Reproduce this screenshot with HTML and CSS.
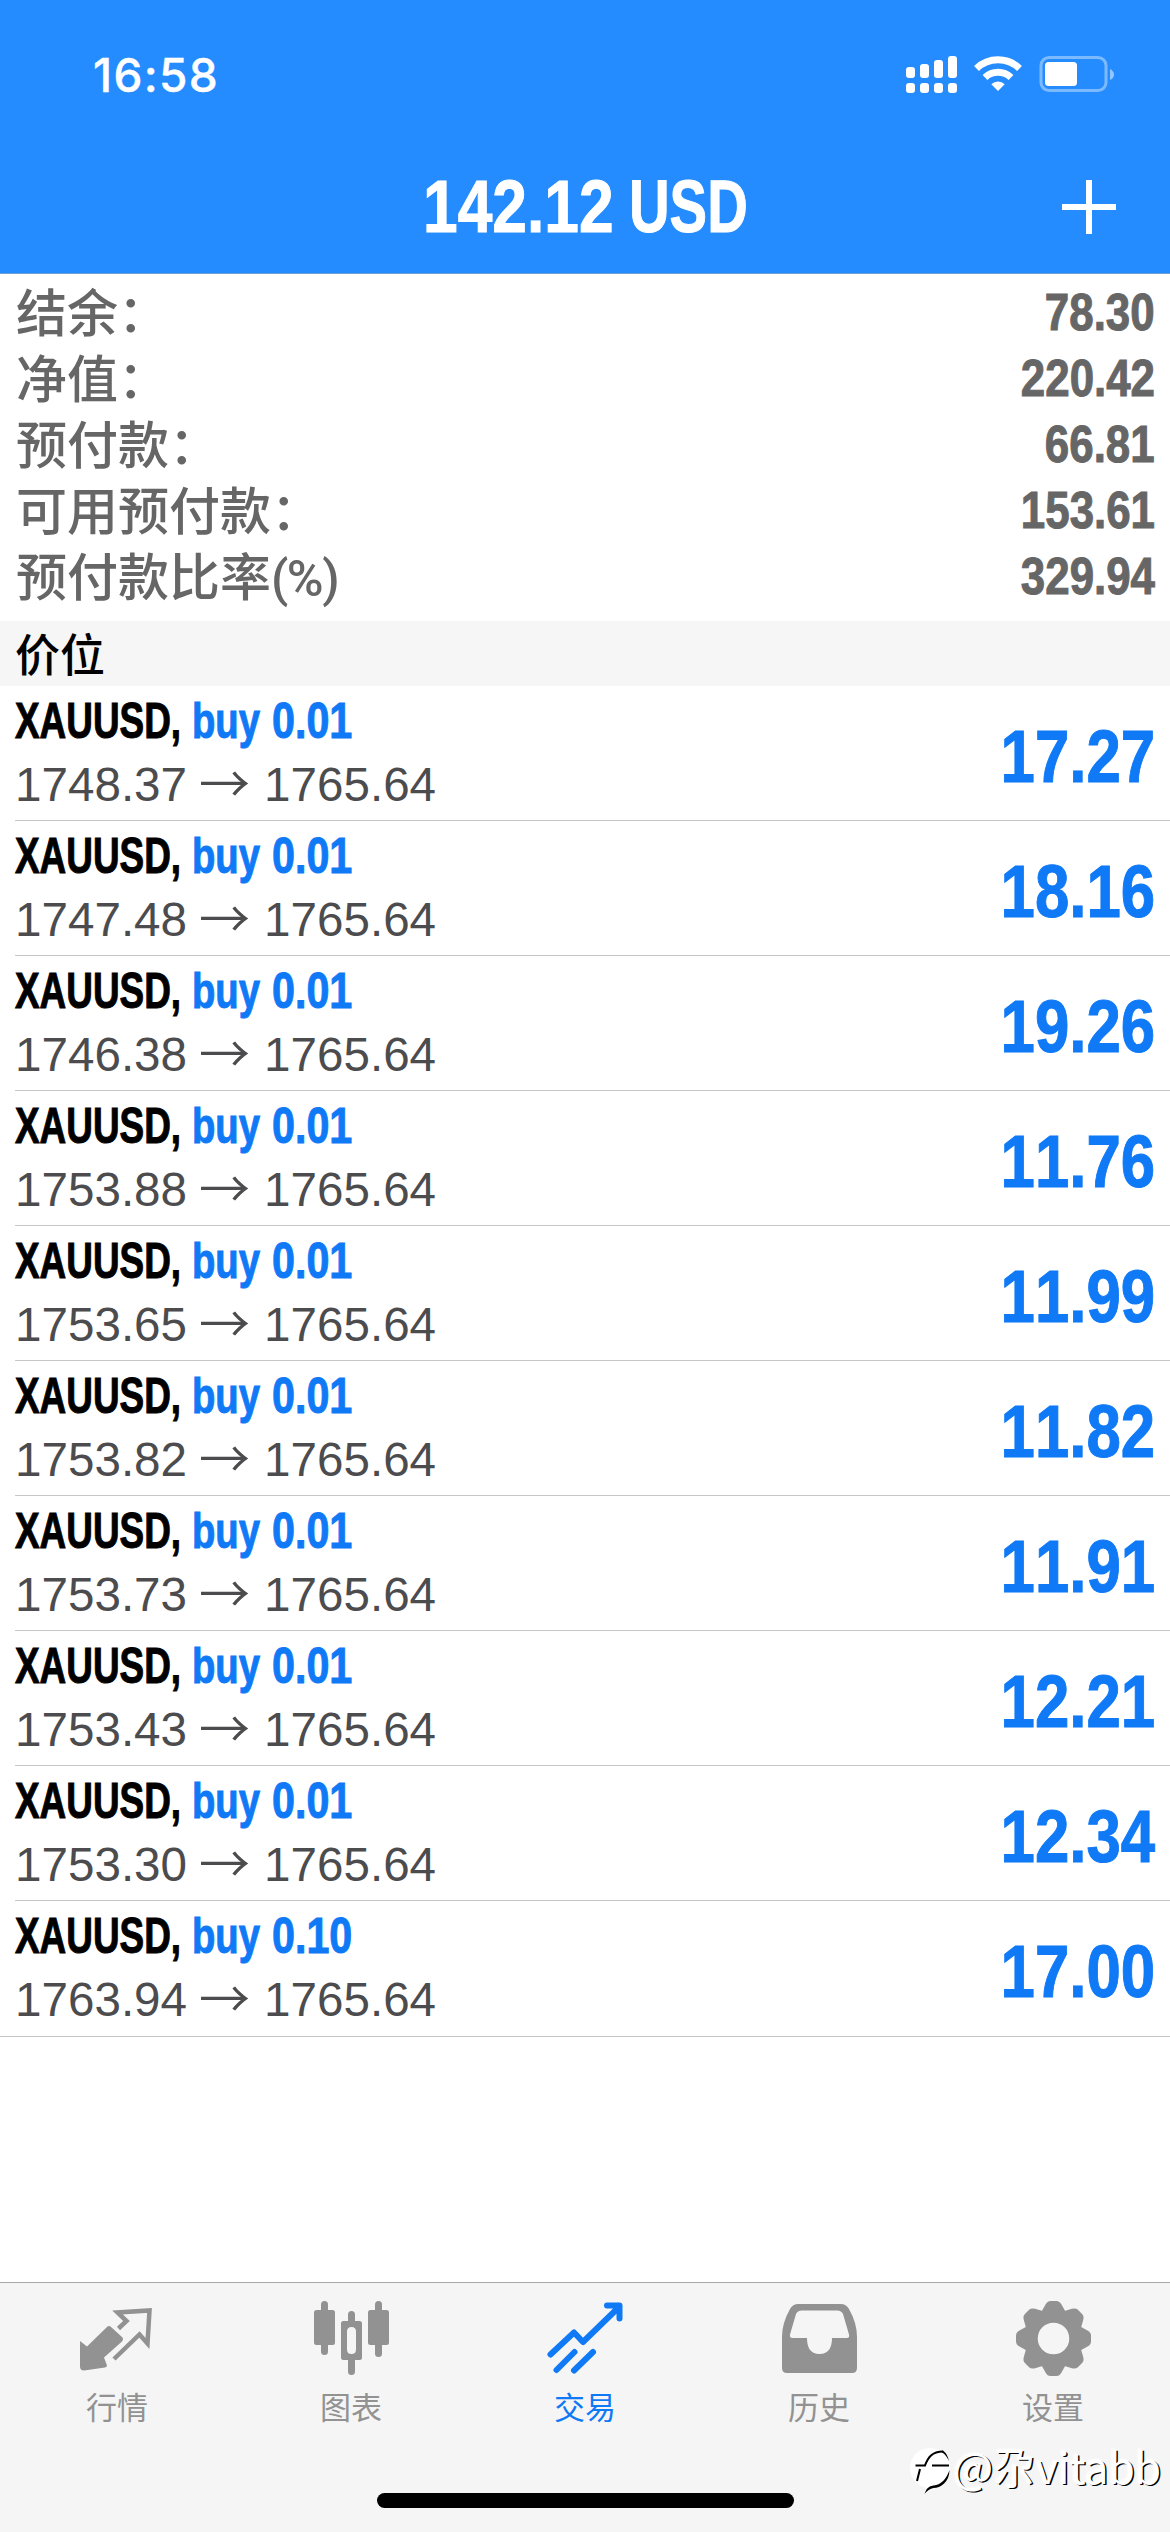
FILE: index.html
```html
<!DOCTYPE html>
<html lang="zh-CN">
<head>
<meta charset="utf-8">
<title>交易</title>
<link rel="stylesheet" href="styles.css">
</head>
<body>
<div class="app">
  <header class="header">
    <div class="status">
      <span class="clock">16:58</span>
      <svg class="status-icons" width="210" height="40" viewBox="906 54 210 40" fill="#fff">
        <rect x="907" y="67" width="9" height="11" rx="3"/><rect x="921" y="64" width="9" height="14" rx="3"/><rect x="935" y="60" width="9" height="18" rx="3"/><rect x="949" y="56" width="9" height="22" rx="3"/>
        <rect x="907" y="83" width="9" height="10" rx="3"/><rect x="921" y="83" width="9" height="10" rx="3"/><rect x="935" y="83" width="9" height="10" rx="3"/><rect x="949" y="83" width="9" height="10" rx="3"/>
        <g fill="none" stroke="#fff" stroke-width="7"><path d="M977.5 68.5a31 31 0 0 1 43 0"/><path d="M986 77.5a19 19 0 0 1 26 0"/></g>
        <path d="M992.300 84.200a9.500 9.500 0 0 1 13.400 0L999 91z"/>
        <rect x="1042" y="57.500" width="65" height="33" rx="8" fill="none" stroke="#fff" stroke-opacity=".4" stroke-width="3"/>
        <rect x="1046" y="62" width="32" height="24" rx="3.500"/>
        <path d="M1111 69q4 2 4 5.500t-4 5.500z" opacity=".5"/>
      </svg>
    </div>
    <div class="titlebar">
      <h1 class="title"><span class="fit t-num"><b>142.12</b></span><span class="fit t-cur"><b>USD</b></span></h1>
      <svg class="plus" width="54" height="54" viewBox="0 0 54 54"><path d="M27 0v54M0 27h54" stroke="#fff" stroke-width="6"/></svg>
    </div>
  </header>

  <section class="summary">
    <div class="sum-row"><span>结余：</span><b>78.30</b></div>
    <div class="sum-row"><span>净值：</span><b>220.42</b></div>
    <div class="sum-row"><span>预付款：</span><b>66.81</b></div>
    <div class="sum-row"><span>可用预付款：</span><b>153.61</b></div>
    <div class="sum-row"><span>预付款比率<em>(%)</em></span><b>329.94</b></div>
  </section>

  <h2 class="section">价位</h2>

  <ul class="positions">
    <li class="pos"><div class="info"><div class="line1"><span class="fit sym"><b>XAUUSD,</b></span><span class="fit side"><b>buy</b></span><span class="fit vol"><b>0.01</b></span></div><div class="line2">1748.37<i>→</i>1765.64</div></div><b class="profit">17.27</b></li>
    <li class="pos"><div class="info"><div class="line1"><span class="fit sym"><b>XAUUSD,</b></span><span class="fit side"><b>buy</b></span><span class="fit vol"><b>0.01</b></span></div><div class="line2">1747.48<i>→</i>1765.64</div></div><b class="profit">18.16</b></li>
    <li class="pos"><div class="info"><div class="line1"><span class="fit sym"><b>XAUUSD,</b></span><span class="fit side"><b>buy</b></span><span class="fit vol"><b>0.01</b></span></div><div class="line2">1746.38<i>→</i>1765.64</div></div><b class="profit">19.26</b></li>
    <li class="pos"><div class="info"><div class="line1"><span class="fit sym"><b>XAUUSD,</b></span><span class="fit side"><b>buy</b></span><span class="fit vol"><b>0.01</b></span></div><div class="line2">1753.88<i>→</i>1765.64</div></div><b class="profit">11.76</b></li>
    <li class="pos"><div class="info"><div class="line1"><span class="fit sym"><b>XAUUSD,</b></span><span class="fit side"><b>buy</b></span><span class="fit vol"><b>0.01</b></span></div><div class="line2">1753.65<i>→</i>1765.64</div></div><b class="profit">11.99</b></li>
    <li class="pos"><div class="info"><div class="line1"><span class="fit sym"><b>XAUUSD,</b></span><span class="fit side"><b>buy</b></span><span class="fit vol"><b>0.01</b></span></div><div class="line2">1753.82<i>→</i>1765.64</div></div><b class="profit">11.82</b></li>
    <li class="pos"><div class="info"><div class="line1"><span class="fit sym"><b>XAUUSD,</b></span><span class="fit side"><b>buy</b></span><span class="fit vol"><b>0.01</b></span></div><div class="line2">1753.73<i>→</i>1765.64</div></div><b class="profit">11.91</b></li>
    <li class="pos"><div class="info"><div class="line1"><span class="fit sym"><b>XAUUSD,</b></span><span class="fit side"><b>buy</b></span><span class="fit vol"><b>0.01</b></span></div><div class="line2">1753.43<i>→</i>1765.64</div></div><b class="profit">12.21</b></li>
    <li class="pos"><div class="info"><div class="line1"><span class="fit sym"><b>XAUUSD,</b></span><span class="fit side"><b>buy</b></span><span class="fit vol"><b>0.01</b></span></div><div class="line2">1753.30<i>→</i>1765.64</div></div><b class="profit">12.34</b></li>
    <li class="pos"><div class="info"><div class="line1"><span class="fit sym"><b>XAUUSD,</b></span><span class="fit side"><b>buy</b></span><span class="fit vol"><b>0.10</b></span></div><div class="line2">1763.94<i>→</i>1765.64</div></div><b class="profit">17.00</b></li>
  </ul>

  <nav class="tabs">
    <a class="tab">
      <svg width="76" height="76" viewBox="0 0 76 76"><path d="M1 41L8 46.500 28 27q2-2 4 0L43 37q2 2 0 4.500L25 57.500l3 8q0 1.500-2 2L5 70.500q-4 0-4-4z" fill="currentColor"/><path d="M39.500 28.500l8-7.500-9-8.500L70.500 10.500 68.500 43.500 60.500 34.500 35 59" fill="none" stroke="currentColor" stroke-width="4.500"/></svg>
      <span>行情</span>
    </a>
    <a class="tab">
      <svg width="76" height="76" viewBox="0 0 76 76" fill="currentColor"><rect x="8" y="1" width="7" height="54" rx="3.500"/><rect x="1" y="10" width="21" height="35" rx="2.500"/><rect x="62" y="1" width="7" height="56" rx="3.500"/><rect x="55" y="10" width="21" height="35" rx="2.500"/><path fill-rule="evenodd" d="M35 21v-6.500a3.500 3.500 0 0 1 7 0V21h4.500q2.500 0 2.500 2.500v34q0 2.500-2.500 2.500H42v11.500a3.500 3.500 0 0 1-7 0V60h-4.500q-2.500 0-2.500-2.500v-34q0-2.500 2.500-2.500zM38.500 27q-4.500 0-4.500 4.500v18q0 4.500 4.500 4.500t4.500-4.500v-18q0-4.500-4.500-4.500z"/></svg>
      <span>图表</span>
    </a>
    <a class="tab active">
      <svg width="76" height="76" viewBox="0 0 76 76" fill="none" stroke="currentColor" stroke-width="6" stroke-linecap="round" stroke-linejoin="round"><path d="M3.500 54.500L27 32.500 36 42 71 8M60 5.500h12.500V18.500"/><path d="M9.500 70L27.500 52M27 70.500L46 52"/></svg>
      <span>交易</span>
    </a>
    <a class="tab">
      <svg width="76" height="76" viewBox="0 0 76 76" fill="currentColor"><path fill-rule="evenodd" d="M17 4h43q5 0 8 5 8 14 8 28v31q0 5-5 5H6q-5 0-5-5V37Q1 23 9 9q3-5 8-5zM21 10.500q-4.500 0-6 3.500L9 34.500q-.5 3.500 2.500 3.500H26c0 9 3 16 12.500 16S51 47 51 38h14.500q3.500 0 2.500-3.500L62 14q-1.500-3.500-6-3.500z"/></svg>
      <span>历史</span>
    </a>
    <a class="tab">
      <svg width="76" height="76" viewBox="-38.500 -38.500 76 76" fill="currentColor"><g><path id="tooth" d="M-13-25L-8-34q2-3.500 5-3.500h6q3 0 5 3.500L13-25z"/><use href="#tooth" transform="rotate(45)"/><use href="#tooth" transform="rotate(90)"/><use href="#tooth" transform="rotate(135)"/><use href="#tooth" transform="rotate(180)"/><use href="#tooth" transform="rotate(225)"/><use href="#tooth" transform="rotate(270)"/><use href="#tooth" transform="rotate(315)"/></g><circle r="22.500" fill="none" stroke="currentColor" stroke-width="13.500"/></svg>
      <span>设置</span>
    </a>
  </nav>
  <div class="home-indicator"></div>
  <div class="watermark">
    <svg width="40" height="48" viewBox="0 0 40 48"><circle cx="20" cy="20" r="20" fill="#fff"/><path d="M20 38l12-4-18 13z" fill="#fff"/><path d="M5.500 17.500h9.500c3-8 7-14 18-14M22 17.500h17M10 21L7 33" fill="none" stroke="#000" stroke-width="2"/><path d="M33 2.500q5 4 6 11-2-6-8-10zM39.500 22c0 12-9 18-16 18q-5 1-9 6 2-8 9-8.500 11-1 16-15.500z"/></svg>
    <span>@尕vitabb</span>
  </div>
</div>
</body>
</html>
```
FILE: styles.css
```css
* { box-sizing: border-box; }
body, h1, h2, ul { margin: 0; padding: 0; }
body { width: 1170px; height: 2532px; background: #fff; font-family: "Liberation Sans", "Noto Sans CJK SC", sans-serif; font-kerning: none; overflow: hidden; }
.app { position: relative; display: flex; flex-direction: column; width: 1170px; height: 2532px; }

.header { height: 274px; background: #258cff; border-bottom: 1px solid #6d9fd6; color: #fff; }
.status { height: 132px; padding: 54px 55px 0 93px; display: flex; justify-content: space-between; }
.clock { font: 500 46px/42px Inter, sans-serif; letter-spacing: 1.3px; -webkit-text-stroke: .4px; }
.status-icons { display: block; }
.titlebar { display: grid; grid-template-columns: 1fr auto 1fr; align-items: center; height: 141px; padding: 8px 54px 0; }
.title { grid-column: 2; display: flex; font-size: 74px; line-height: 84px; gap: 15px; }
.plus { justify-self: end; }

.fit { display: block; white-space: nowrap; }
.fit b { display: block; transform-origin: 0 50%; }
.fit b, .sum-row b, .profit { -webkit-text-stroke: 1px; }
.t-num { width: 191px; }
.t-num b { transform: scaleX(.842); }
.t-cur { width: 118px; }
.t-cur b { transform: scaleX(.76); }

.summary { height: 347px; padding-top: 6px; color: #666; }
.sum-row { display: flex; justify-content: space-between; height: 66px; padding: 0 15px 0 16px; line-height: 66px; font-size: 51px; }
.sum-row span { height: 66px; font-family: "Noto Sans CJK SC", sans-serif; font-weight: 500; line-height: 61px; }
.sum-row em { font: 500 50px/50px Roboto, sans-serif; letter-spacing: -1.500px; }
.sum-row b { transform: scaleX(.86); transform-origin: 100% 50%; }

.section { height: 65px; padding-left: 15px; background: #f6f6f6; font: 500 45px/63px "Noto Sans CJK SC", sans-serif; color: #000; }

.positions { list-style: none; }
.pos { display: flex; justify-content: space-between; height: 135px; margin-left: 15px; padding-right: 15px; border-bottom: 1px solid #c6c6c8; }
.pos:last-child { height: 136px; margin-left: 0; padding-left: 15px; }
.line1 { display: flex; height: 66px; padding-top: 7px; font-size: 50px; line-height: 57px; color: #0f79f6; }
.sym { width: 177px; color: #000; }
.sym b { transform: scaleX(.738); }
.side { width: 80px; }
.side b { transform: scaleX(.765); }
.vol b { transform: scaleX(.825); }
.line2 { display: flex; padding-top: 6px; font-size: 47.600px; line-height: 54px; color: #4c4c4e; }
.line2 i { width: 77px; padding-left: 12px; font: 350 51px/46px "Noto Sans CJK SC", sans-serif; }
.profit { padding-top: 29px; font-size: 74px; line-height: 84px; color: #0f79f6; transform: scaleX(.835); transform-origin: 100% 50%; }

.tabs { display: grid; grid-template-columns: repeat(5, 1fr); height: 250px; margin-top: auto; padding-top: 17px; background: #f5f5f5; border-top: 1px solid #a8a8a8; color: #929292; }
.tab { display: flex; flex-direction: column; align-items: center; gap: 7px; }
.tab svg { display: block; }
.tab span { font: 400 31px/46px "Noto Sans CJK SC", sans-serif; }
.active { color: #0f79f6; }
.home-indicator { position: absolute; left: 377px; top: 2493px; width: 417px; height: 15px; border-radius: 8px; background: #000; }
.watermark { position: absolute; left: 910px; top: 2448px; display: flex; gap: 3px; color: #fff; }
.watermark span { font: 400 42.500px/36px "Noto Sans CJK SC", sans-serif; text-shadow: 1.500px 1px 0 #000, -1px -1px 2px #fff; }
```
